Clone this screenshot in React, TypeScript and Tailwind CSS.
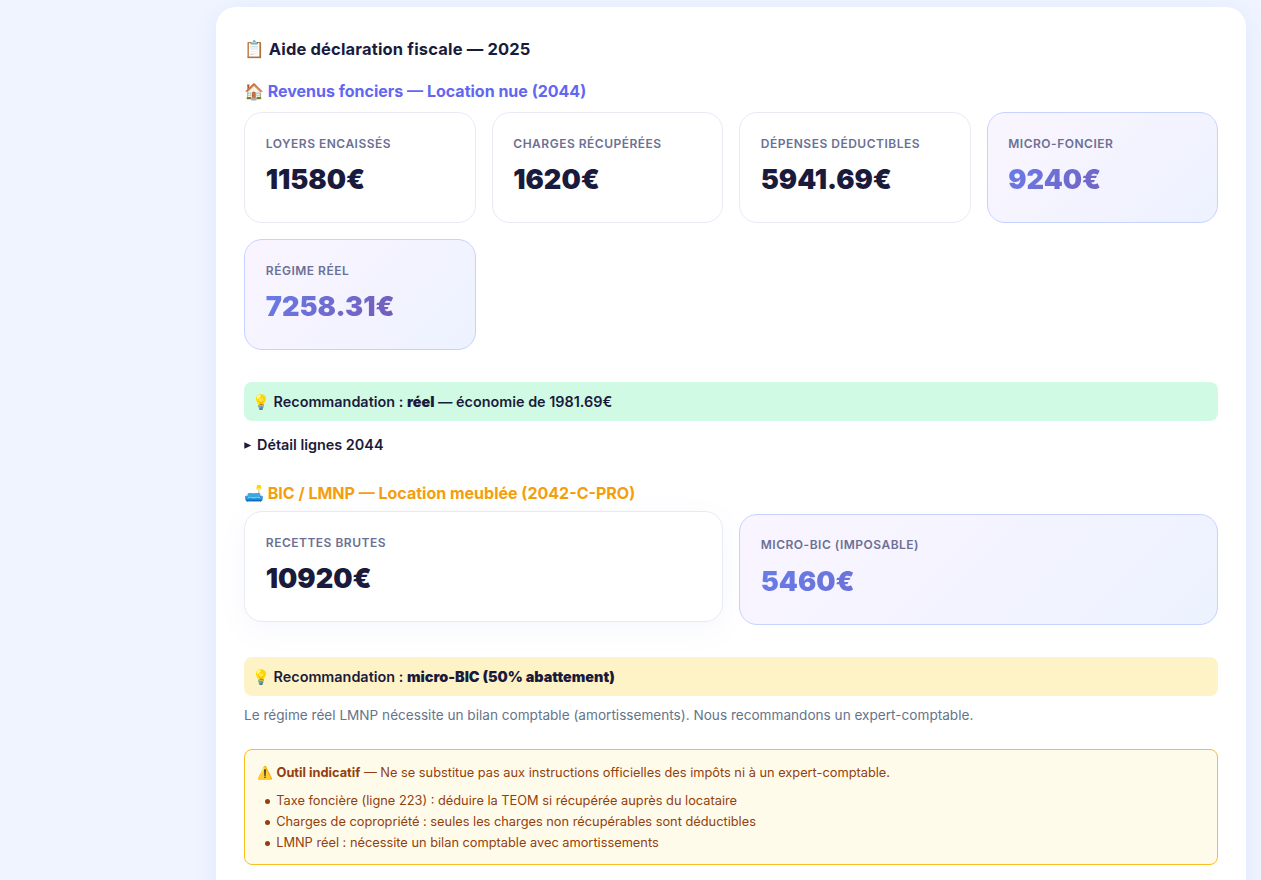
type StatProps = { label: string; value: string; variant?: 'plain' | 'accent' | 'raised'; compact?: boolean };

const cardStyles = {
  plain: 'border-[#e8eaf6] bg-white',
  accent: 'border-[#c7d2fe] bg-linear-135 from-[#faf5ff] to-[#edf2ff]',
  raised: 'relative -top-[3px] border-[#e8eaf6] bg-white shadow-[0_8px_30px_rgba(102,126,234,0.06)]',
};

function Stat({ label, value, variant = 'plain', compact = false }: StatProps) {
  return (
    <div className={`h-[111px] rounded-[18px] border px-[20.8px] ${compact ? 'pt-5' : 'pt-[21px]'} ${cardStyles[variant]}`}>
      <div className="h-[19px] text-[12px] leading-[19px] font-semibold tracking-[0.5px] text-[#6b7094] uppercase">
        {label}
      </div>
      <div
        className={`${compact ? 'mt-[6px]' : 'mt-[5px]'} text-[27.2px] leading-[43px] font-black tracking-[-0.04px] ${
          variant === 'accent'
            ? 'bg-linear-135 from-[#667eea] to-[#764ba2] bg-clip-text text-transparent'
            : 'text-[#1a1b3c]'
        }`}
      >
        {value}
      </div>
    </div>
  );
}

const notes = [
  'Taxe foncière (ligne 223) : déduire la TEOM si récupérée auprès du locataire',
  'Charges de copropriété : seules les charges non récupérables sont déductibles',
  'LMNP réel : nécessite un bilan comptable avec amortissements',
];

export default function App() {
  return (
    <div className="h-[880px] overflow-hidden bg-[#f0f4ff] pt-[7px] pr-[15px] pl-[216px] font-['Inter','Noto_Color_Emoji',sans-serif] text-[#1a1b3c]">
      <main className="h-[900px] rounded-[20px] bg-white px-7 pt-7 shadow-[0_4px_24px_rgba(102,126,234,0.1)]">
        <h1 className="h-7 text-[16.5px] leading-[29px] font-bold tracking-[0.16px]">📋 Aide déclaration fiscale — 2025</h1>

        <section>
          <h2 className="mt-[15px] h-[26px] text-[16px] leading-[26px] font-bold text-[#6366f1]">
            🏠 Revenus fonciers — Location nue (2044)
          </h2>
          <div className="mt-2 grid grid-cols-4 gap-4">
            <Stat label="Loyers encaissés" value="11580€" />
            <Stat label="Charges récupérées" value="1620€" />
            <Stat label="Dépenses déductibles" value="5941.69€" />
            <Stat label="Micro-foncier" value="9240€" variant="accent" />
            <Stat label="Régime réel" value="7258.31€" variant="accent" />
          </div>
          <div className="mt-8 h-[39px] rounded-lg bg-[#d1fae5] px-2 text-[14.4px] leading-[39px] font-semibold">
            💡 Recommandation : <strong className="font-black">réel</strong> — économie de 1981.69€
          </div>
          <details className="mt-3 text-[14.4px] leading-6 font-semibold">
            <summary className="flex list-none items-center gap-[5px]">
              <svg className="mt-px h-[7px] w-2" viewBox="0 0 8 7" fill="currentColor" aria-hidden="true">
                <path d="M0.3 0.2 7.3 3.5 0.3 6.8Z" />
              </svg>
              Détail lignes 2044
            </summary>
          </details>
        </section>

        <section>
          <h2 className="mt-6 h-[25px] text-[16px] leading-[25px] font-bold text-[#f59e0b]">
            🛋️ BIC / LMNP — Location meublée (2042-C-PRO)
          </h2>
          <div className="mt-2 grid grid-cols-2 gap-4">
            <Stat label="Recettes brutes" value="10920€" variant="raised" />
            <Stat label="Micro-BIC (imposable)" value="5460€" variant="accent" compact />
          </div>
          <div className="mt-8 h-[39px] rounded-lg bg-[#fef3c7] px-2 text-[14.4px] leading-[39px] font-semibold">
            💡 Recommandation : <strong className="font-black">micro-BIC (50% abattement)</strong>
          </div>
          <p className="mt-2 h-[22px] text-[13.6px] leading-[22px] text-[#64748b]">
            Le régime réel LMNP nécessite un bilan comptable (amortissements). Nous recommandons un expert-comptable.
          </p>
        </section>

        <aside className="mt-[23px] h-[116px] rounded-lg border border-[#fbbf24] bg-[#fffbeb] px-3 pt-3 text-[12.8px] leading-[21px] text-[#92400e]">
          <p>
            ⚠️ <strong className="font-bold">Outil indicatif</strong> — Ne se substitue pas aux instructions officielles
            des impôts ni à un expert-comptable.
          </p>
          <ul className="mt-[7px] pl-2">
            {notes.map((note) => (
              <li
                key={note}
                className="flex items-center gap-[6.2px] before:mt-0.5 before:size-[5px] before:rounded-full before:bg-current before:content-['']"
              >
                {note}
              </li>
            ))}
          </ul>
        </aside>
      </main>
    </div>
  );
}
